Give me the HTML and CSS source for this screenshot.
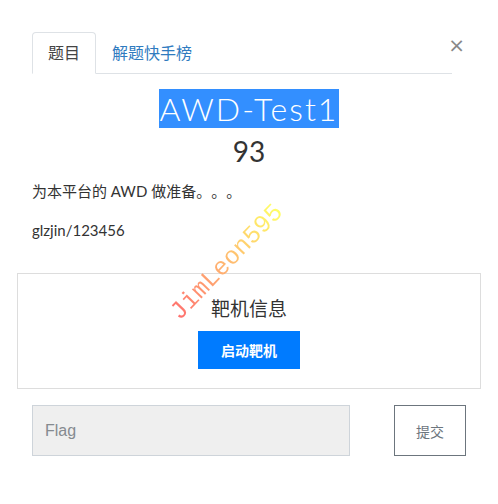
FILE: index.html
```html
<!DOCTYPE html>
<html lang="zh-CN">

<head>
  <meta charset="UTF-8">
  <meta name="viewport" content="width=device-width, initial-scale=1.0">
  <title>AWD-Test1</title>
  <link rel="stylesheet" href="styles.css">
</head>

<body>
  <div class="modal">
    <div class="modalHeader">
      <ul class="tabs">
        <li class="tab active">题目</li>
        <li class="tab">解题快手榜</li>
      </ul>
      <button class="closeBtn">&times;</button>
    </div>

    <div class="modalBody">
      <h3 class="chalName"><span class="selected">AWD-Test1</span></h3>
      <h4 class="chalValue">93</h4>
      <p class="chalDesc">为本平台的 AWD 做准备。。。</p>
      <p class="chalDesc">glzjin/123456</p>

      <div class="targetBox">
        <h4 class="targetTitle">靶机信息</h4>
        <button class="startBtn">启动靶机</button>
      </div>

      <form class="flagRow">
        <input class="flagInput" type="text" placeholder="Flag">
        <button class="submitBtn">提交</button>
      </form>
    </div>

    <div class="watermark">JimLeon595</div>
  </div>
</body>

</html>
```

FILE: styles.css
```css
body {
  margin: 0;
  font-family: Lato, "Noto Sans CJK SC", sans-serif;
  color: #333;
  background: #fff;
  text-spacing-trim: space-all;
}

.modal {
  position: relative;
  width: 498px;
  height: 504px;
}

.modalHeader {
  position: relative;
  padding: 32px 46px 0 32px;
}

.tabs {
  display: flex;
  list-style: none;
  margin: 0;
  padding: 0;
  border-bottom: 1px solid #dee2e6;
}

.tab {
  padding: 10px 15px;
  height: 20px;
  font-size: 16px;
  line-height: 20px;
  color: #2f7bbf;
  border: 1px solid transparent;
  margin-bottom: -1px;
}

.tab.active {
  color: #444;
  border-color: #dee2e6 #dee2e6 #fff;
  border-radius: 4px 4px 0 0;
}

.closeBtn {
  position: absolute;
  top: 35px;
  right: 33px;
  border: none;
  background: none;
  padding: 0;
  font-size: 20px;
  line-height: 20px;
  color: #888;
  font-family: "DejaVu Sans", sans-serif;
}

.modalBody {
  padding: 0 17px;
}

.chalName {
  text-align: center;
  margin: 16px 0 0;
  font-weight: 300;
  font-size: 32px;
  line-height: 37px;
  letter-spacing: 2px;
}

.selected {
  background: #338fff;
  color: #fff;
  padding: 0 1px;
}

.chalValue {
  text-align: center;
  margin: 6px 0 0;
  font-weight: 400;
  font-size: 28px;
  line-height: 36px;
}

.chalDesc {
  margin: 12px 15px 0;
  font-size: 15px;
  line-height: 20px;
}

.chalDesc + .chalDesc {
  margin-top: 19px;
}

.targetBox {
  margin-top: 33px;
  border: 1px solid #ddd;
  height: 114px;
  display: flex;
  flex-direction: column;
  align-items: center;
}

.targetTitle {
  margin: 22px 0 0;
  font-weight: 400;
  font-size: 19px;
  line-height: 26px;
}

.startBtn {
  margin-top: 9px;
  width: 102px;
  height: 38px;
  border: none;
  background: #007bff;
  color: #fff;
  font-size: 14px;
  font-weight: bold;
  font-family: "Noto Sans CJK SC", sans-serif;
}

.flagRow {
  display: flex;
  justify-content: space-between;
  margin: 16px 15px 0;
}

.flagInput {
  width: 318px;
  height: 51px;
  box-sizing: border-box;
  padding: 0 12px;
  border: 1px solid #ced4da;
  background: #efefef;
  font-size: 16px;
  font-family: "Liberation Sans", sans-serif;
  outline: none;
}

.flagInput::placeholder {
  color: #858a8f;
}

.submitBtn {
  width: 72px;
  height: 51px;
  border: 1px solid #6c757d;
  background: #fff;
  color: #6c757d;
  font-size: 14px;
  font-family: "Noto Sans CJK SC", sans-serif;
}

.watermark {
  position: absolute;
  left: 152px;
  top: 248px;
  transform: rotate(-46deg);
  font-family: "Liberation Mono", monospace;
  font-size: 25px;
  background: linear-gradient(90deg, #ff6f6f, #ffc070 55%, #ffff66);
  -webkit-background-clip: text;
  background-clip: text;
  color: transparent;
  pointer-events: none;
}
```
